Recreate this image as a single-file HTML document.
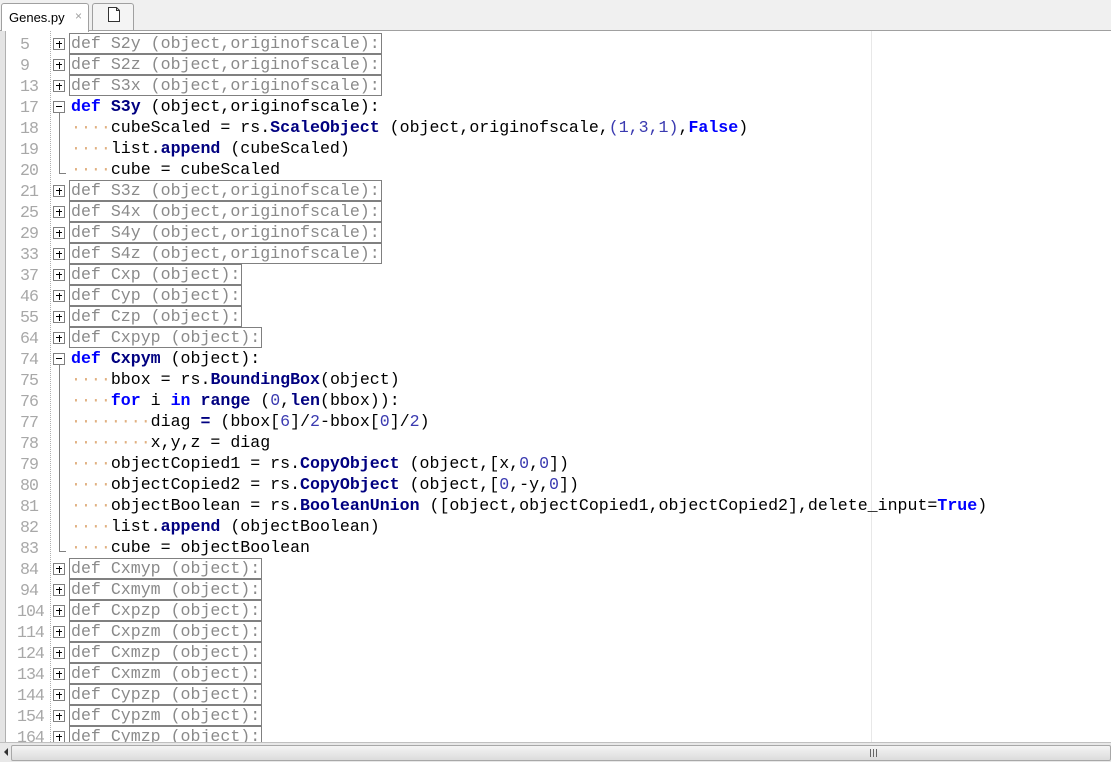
<!DOCTYPE html>
<html><head><meta charset="utf-8"><style>
*{margin:0;padding:0;box-sizing:border-box}
body{width:1111px;height:762px;overflow:hidden;background:#fff;position:relative;font-family:"Liberation Mono",monospace}
.tabbar{position:absolute;left:0;top:0;width:1111px;height:31px;background:#f0f0f0;border-bottom:1px solid #a0a0a0}
.tab1{position:absolute;left:1px;top:3px;width:88px;height:29px;background:#fff;border:1px solid #a0a0a0;border-bottom:none;border-radius:3px 3px 0 0;font-family:"Liberation Sans",sans-serif;font-size:13px;padding:6px 0 0 7px;color:#000}
.tab1 .x{position:absolute;left:73px;top:5px;color:#a0a0a0;font-size:12px}
.tab2{position:absolute;left:92px;top:3px;width:42px;height:27px;background:#f4f4f4;border:1px solid #a0a0a0;border-bottom:none;border-radius:3px 3px 0 0}
.leftstrip{position:absolute;left:0;top:31px;width:6px;height:711px;background:#e4e4e4;border-right:1px solid #b0b0b0}
.dotline{position:absolute;left:50px;top:31px;height:711px;border-left:1px dotted #b0b0b0}
.edge{position:absolute;left:871px;top:31px;height:711px;border-left:1px solid #e8e8e8}
.row{position:absolute;left:0;height:21px;width:1111px}
.ln{position:absolute;left:20px;top:1px;font-size:16.6px;color:#a8a8a8;line-height:21px;letter-spacing:-1px}
.fb{position:absolute;left:53px;top:5px;width:12px;height:12px;border:1px solid #808080;background:#fff}
.fb:before{content:"";position:absolute;left:2px;top:4px;width:6px;height:1px;background:#000}
.fb.p:after{content:"";position:absolute;left:4.5px;top:1.5px;width:1px;height:7px;background:#000}
.code{position:absolute;left:71px;top:0;font-size:16.6px;line-height:21px;white-space:pre;color:#000}
.fold{color:#8a8a8a;outline:1px solid #808080;outline-offset:0;padding:0 1px 0 0;margin-left:-1px;padding-left:1px}
.k{color:#0000ff;font-weight:bold}
.f{color:#000080;font-weight:bold}
.n{color:#3a3ab0}
.d{color:#e0b080}
.vl{position:absolute;left:59px;width:1px;background:#808080}
.hscroll{position:absolute;left:0;top:742px;width:1111px;height:20px;background:#e8e8e8;border-top:1px solid #c0c0c0}
.thumb{position:absolute;left:11px;top:2px;width:1100px;height:16px;background:linear-gradient(#f4f4f4,#dcdcdc);border:1px solid #a8a8a8;border-radius:2px}
</style></head><body>
<div class="tabbar">
<div class="tab1">Genes.py<span class="x">×</span></div>
<div class="tab2"><svg width="14" height="16" style="position:absolute;left:14px;top:3px" viewBox="0 0 14 16"><path d="M1.5 0.5h8l3 3v11h-11z" fill="#fff" stroke="#333"/><path d="M9.5 0.5v3h3" fill="none" stroke="#333"/></svg></div>
</div>
<div class="leftstrip"></div>
<div class="dotline"></div>
<div class="edge"></div>
<div class="vl" style="top:112px;height:62px"></div>
<div style="position:absolute;left:59px;top:173px;width:7px;height:1px;background:#808080"></div>
<div class="vl" style="top:364px;height:188px"></div>
<div style="position:absolute;left:59px;top:551px;width:7px;height:1px;background:#808080"></div>

<div class="row" style="top:33px"><span class="ln">5</span><span class="fb p"></span><span class="code"><span class="fold">def S2y (object,originofscale):</span></span></div>
<div class="row" style="top:54px"><span class="ln">9</span><span class="fb p"></span><span class="code"><span class="fold">def S2z (object,originofscale):</span></span></div>
<div class="row" style="top:75px"><span class="ln">13</span><span class="fb p"></span><span class="code"><span class="fold">def S3x (object,originofscale):</span></span></div>
<div class="row" style="top:96px"><span class="ln">17</span><span class="fb"></span><span class="code"><span class="k">def</span> <span class="f">S3y</span> (object,originofscale):</span></div>
<div class="row" style="top:117px"><span class="ln">18</span><span class="code"><span class="d">····</span>cubeScaled = rs.<span class="f">ScaleObject</span> (object,originofscale,<span class="n">(1,3,1)</span>,<span class="k">False</span>)</span></div>
<div class="row" style="top:138px"><span class="ln">19</span><span class="code"><span class="d">····</span>list.<span class="f">append</span> (cubeScaled)</span></div>
<div class="row" style="top:159px"><span class="ln">20</span><span class="code"><span class="d">····</span>cube = cubeScaled</span></div>
<div class="row" style="top:180px"><span class="ln">21</span><span class="fb p"></span><span class="code"><span class="fold">def S3z (object,originofscale):</span></span></div>
<div class="row" style="top:201px"><span class="ln">25</span><span class="fb p"></span><span class="code"><span class="fold">def S4x (object,originofscale):</span></span></div>
<div class="row" style="top:222px"><span class="ln">29</span><span class="fb p"></span><span class="code"><span class="fold">def S4y (object,originofscale):</span></span></div>
<div class="row" style="top:243px"><span class="ln">33</span><span class="fb p"></span><span class="code"><span class="fold">def S4z (object,originofscale):</span></span></div>
<div class="row" style="top:264px"><span class="ln">37</span><span class="fb p"></span><span class="code"><span class="fold">def Cxp (object):</span></span></div>
<div class="row" style="top:285px"><span class="ln">46</span><span class="fb p"></span><span class="code"><span class="fold">def Cyp (object):</span></span></div>
<div class="row" style="top:306px"><span class="ln">55</span><span class="fb p"></span><span class="code"><span class="fold">def Czp (object):</span></span></div>
<div class="row" style="top:327px"><span class="ln">64</span><span class="fb p"></span><span class="code"><span class="fold">def Cxpyp (object):</span></span></div>
<div class="row" style="top:348px"><span class="ln">74</span><span class="fb"></span><span class="code"><span class="k">def</span> <span class="f">Cxpym</span> (object):</span></div>
<div class="row" style="top:369px"><span class="ln">75</span><span class="code"><span class="d">····</span>bbox = rs.<span class="f">BoundingBox</span>(object)</span></div>
<div class="row" style="top:390px"><span class="ln">76</span><span class="code"><span class="d">····</span><span class="k">for</span> i <span class="k">in</span> <span class="f">range</span> (<span class="n">0</span>,<span class="f">len</span>(bbox)):</span></div>
<div class="row" style="top:411px"><span class="ln">77</span><span class="code"><span class="d">········</span>diag <span class="f">=</span> (bbox[<span class="n">6</span>]/<span class="n">2</span>-bbox[<span class="n">0</span>]/<span class="n">2</span>)</span></div>
<div class="row" style="top:432px"><span class="ln">78</span><span class="code"><span class="d">········</span>x,y,z = diag</span></div>
<div class="row" style="top:453px"><span class="ln">79</span><span class="code"><span class="d">····</span>objectCopied1 = rs.<span class="f">CopyObject</span> (object,[x,<span class="n">0</span>,<span class="n">0</span>])</span></div>
<div class="row" style="top:474px"><span class="ln">80</span><span class="code"><span class="d">····</span>objectCopied2 = rs.<span class="f">CopyObject</span> (object,[<span class="n">0</span>,-y,<span class="n">0</span>])</span></div>
<div class="row" style="top:495px"><span class="ln">81</span><span class="code"><span class="d">····</span>objectBoolean = rs.<span class="f">BooleanUnion</span> ([object,objectCopied1,objectCopied2],delete_input=<span class="k">True</span>)</span></div>
<div class="row" style="top:516px"><span class="ln">82</span><span class="code"><span class="d">····</span>list.<span class="f">append</span> (objectBoolean)</span></div>
<div class="row" style="top:537px"><span class="ln">83</span><span class="code"><span class="d">····</span>cube = objectBoolean</span></div>
<div class="row" style="top:558px"><span class="ln">84</span><span class="fb p"></span><span class="code"><span class="fold">def Cxmyp (object):</span></span></div>
<div class="row" style="top:579px"><span class="ln">94</span><span class="fb p"></span><span class="code"><span class="fold">def Cxmym (object):</span></span></div>
<div class="row" style="top:600px"><span class="ln" style="left:17px">104</span><span class="fb p"></span><span class="code"><span class="fold">def Cxpzp (object):</span></span></div>
<div class="row" style="top:621px"><span class="ln" style="left:17px">114</span><span class="fb p"></span><span class="code"><span class="fold">def Cxpzm (object):</span></span></div>
<div class="row" style="top:642px"><span class="ln" style="left:17px">124</span><span class="fb p"></span><span class="code"><span class="fold">def Cxmzp (object):</span></span></div>
<div class="row" style="top:663px"><span class="ln" style="left:17px">134</span><span class="fb p"></span><span class="code"><span class="fold">def Cxmzm (object):</span></span></div>
<div class="row" style="top:684px"><span class="ln" style="left:17px">144</span><span class="fb p"></span><span class="code"><span class="fold">def Cypzp (object):</span></span></div>
<div class="row" style="top:705px"><span class="ln" style="left:17px">154</span><span class="fb p"></span><span class="code"><span class="fold">def Cypzm (object):</span></span></div>
<div class="row" style="top:726px;height:16px;overflow:hidden"><span class="ln" style="left:17px">164</span><span class="fb p"></span><span class="code"><span class="fold">def Cymzp (object):</span></span></div>

<div class="hscroll">
<svg width="6" height="8" style="position:absolute;left:3px;top:5px"><path d="M5 0L1 4L5 8z" fill="#333"/></svg>
<div class="thumb"><div style="position:absolute;left:858px;top:3px;width:7px;height:8px;border-left:1px solid #666;border-right:1px solid #666"><div style="margin-left:2px;width:1px;height:8px;background:#666"></div></div></div>
</div>
</body></html>
